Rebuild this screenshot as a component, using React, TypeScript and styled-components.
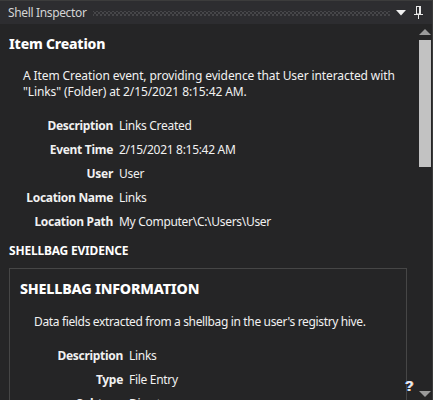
import React from "react";
import styled, { createGlobalStyle } from "styled-components";

const Global = createGlobalStyle`
  html, body { margin: 0; padding: 0; background: #252526; }
  * { box-sizing: border-box; }
`;

const FONT = `"Noto Sans", "Open Sans", "Liberation Sans", sans-serif`;

const Panel = styled.div`
  position: relative;
  width: 433px;
  height: 400px;
  overflow: hidden;
  display: flex;
  flex-direction: column;
  background: #252526;
  font-family: ${FONT};
  color: #f1f1f1;
  border-right: 1px solid #3a3a3a;
`;

const TitleBar = styled.div`
  height: 24px;
  flex: none;
  display: flex;
  align-items: center;
  padding: 0 9px 0 8px;
  background: #2d2d30;
  border-top: 1px solid #3c3c3c;
  gap: 6px;
`;

const Title = styled.span`
  font-size: 12px;
  color: #d4d4d4;
  white-space: nowrap;
  letter-spacing: -0.35px;
`;

const Grip = styled.div`
  flex: 1;
  height: 5px;
  margin-top: 2px;
  background-image:
    radial-gradient(circle, #464649 0.9px, transparent 1px),
    radial-gradient(circle, #464649 0.9px, transparent 1px);
  background-size: 4px 4px;
  background-position: 0 0, 2px 2px;
`;

const IconBtn = styled.span`
  display: flex;
  align-items: center;
  justify-content: center;
  flex: none;
`;

const Body = styled.div`
  flex: 1;
  display: flex;
  min-height: 0;
`;

const Content = styled.div`
  flex: 1;
  padding: 10px 0 0 9px;
  min-width: 0;
`;

const Heading = styled.div<{ $size?: number }>`
  font-size: ${(p) => p.$size ?? 14}px;
  font-weight: 800;
  line-height: 20px;
  color: #ffffff;
  letter-spacing: -0.2px;
`;

const Summary = styled.p<{ $indent: number; $top: number; $tracking?: number }>`
  margin: ${(p) => p.$top}px 0 0 ${(p) => p.$indent}px;
  font-size: 12px;
  line-height: 16px;
  color: #f1f1f1;
  letter-spacing: ${(p) => p.$tracking ?? -0.1}px;
`;

const PropGrid = styled.div<{ $labelWidth: number; $indent: number; $top: number }>`
  display: grid;
  grid-template-columns: ${(p) => p.$labelWidth}px 1fr;
  column-gap: 6px;
  grid-auto-rows: 24px;
  align-items: center;
  margin: ${(p) => p.$top}px 0 0 ${(p) => p.$indent}px;
  font-size: 12px;
`;

const Label = styled.span`
  text-align: right;
  font-weight: 700;
  color: #f1f1f1;
  white-space: nowrap;
  letter-spacing: -0.3px;
`;

const Value = styled.span`
  color: #f1f1f1;
  white-space: nowrap;
  letter-spacing: -0.3px;
`;

const SectionLabel = styled.div`
  margin-top: 9px;
  font-size: 12px;
  font-weight: 700;
  line-height: 18px;
  color: #ffffff;
  letter-spacing: -0.2px;
`;

const Card = styled.div`
  margin-top: 8px;
  width: 398px;
  border: 1px solid #464646;
  padding: 10px 0 0 10px;
  height: 200px;
`;

const ScrollBar = styled.div`
  width: 15px;
  flex: none;
  display: flex;
  flex-direction: column;
  align-items: flex-start;
  padding: 5px 0 3px 2px;
`;

const Thumb = styled.div`
  width: 12px;
  height: 127px;
  margin-top: 5px;
  background: #c2c2c2;
`;

const Spacer = styled.div`
  flex: 1;
`;

const Help = styled.span`
  position: absolute;
  left: 405px;
  top: 378px;
  font-family: "Liberation Sans", sans-serif;
  font-size: 14px;
  font-weight: 700;
  color: #e8e8f0;
  text-shadow: -0.6px 0 #6fa8ff, 0.6px 0 #ffb060;
`;

const Arrow = ({ up }: { up?: boolean }) => (
  <svg width="12" height="6" viewBox="0 0 12 6">
    <polygon points={up ? "0,6 6,0 12,6" : "0,0 12,0 6,6"} fill="#9a9a9a" />
  </svg>
);

const rows1: [string, string][] = [
  ["Description", "Links Created"],
  ["Event Time", "2/15/2021 8:15:42 AM"],
  ["User", "User"],
  ["Location Name", "Links"],
  ["Location Path", "My Computer\\C:\\Users\\User"],
];

const rows2: [string, string][] = [
  ["Description", "Links"],
  ["Type", "File Entry"],
  ["Subtype", "Directory"],
];

export default function App() {
  return (
    <>
      <Global />
      <Panel>
        <TitleBar>
          <Title>Shell Inspector</Title>
          <Grip />
          <IconBtn>
            <svg width="10" height="6" viewBox="0 0 10 6">
              <polygon points="0,0 10,0 5,5.5" fill="#f0f0f0" />
            </svg>
          </IconBtn>
          <IconBtn style={{ marginLeft: 2 }}>
            <svg width="9" height="13" viewBox="0 0 9 13">
              <rect x="2.5" y="0.5" width="4" height="7.5" fill="none" stroke="#e8e8e8" />
              <rect x="5" y="1" width="1" height="7" fill="#e8e8e8" />
              <rect x="0" y="8" width="9" height="1" fill="#e8e8e8" />
              <rect x="4" y="9" width="1" height="4" fill="#e8e8e8" />
            </svg>
          </IconBtn>
        </TitleBar>
        <Body>
          <Content>
            <Heading>Item Creation</Heading>
            <Summary $indent={14} $top={14}>
              A Item Creation event, providing evidence that User interacted with
              <br />
              "Links" (Folder) at 2/15/2021 8:15:42 AM.
            </Summary>
            <PropGrid $labelWidth={90} $indent={14} $top={13}>
              {rows1.map(([l, v]) => (
                <React.Fragment key={l}>
                  <Label>{l}</Label>
                  <Value>{v}</Value>
                </React.Fragment>
              ))}
            </PropGrid>
            <SectionLabel>SHELLBAG EVIDENCE</SectionLabel>
            <Card>
              <Heading $size={14.3}>SHELLBAG INFORMATION</Heading>
              <Summary $indent={14} $top={15} $tracking={-0.35}>
                Data fields extracted from a shellbag in the user's registry hive.
              </Summary>
              <PropGrid $labelWidth={90} $indent={13} $top={13}>
                {rows2.map(([l, v]) => (
                  <React.Fragment key={l}>
                    <Label>{l}</Label>
                    <Value>{v}</Value>
                  </React.Fragment>
                ))}
              </PropGrid>
            </Card>
          </Content>
          <ScrollBar>
            <Arrow up />
            <Thumb />
            <Spacer />
            <Arrow />
          </ScrollBar>
        </Body>
        <Help>?</Help>
      </Panel>
    </>
  );
}
